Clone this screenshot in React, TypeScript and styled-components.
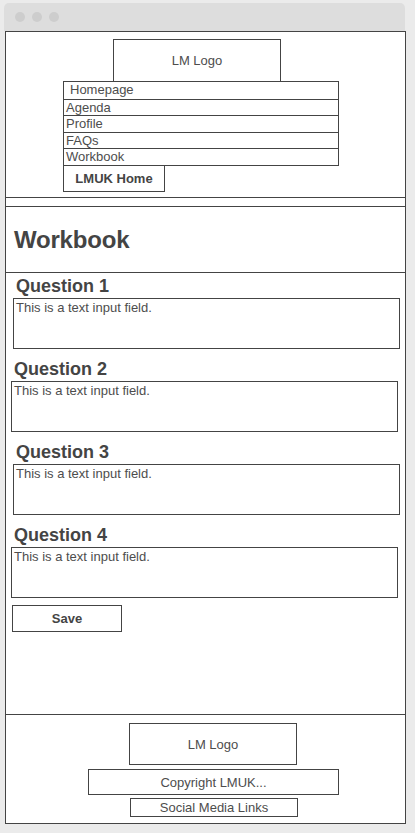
import React from "react";
import styled, { createGlobalStyle } from "styled-components";

const Global = createGlobalStyle`
  html, body { margin: 0; padding: 0; background: #ebebeb; }
  body { font-family: "Liberation Sans", Arial, sans-serif; color: #4a4a4a; }
  * { box-sizing: border-box; }
`;

const Page = styled.div`
  width: 415px;
  height: 833px;
  padding: 3px 10px 0 4px;
`;

const Chrome = styled.div`
  height: 28px;
  width: 401px;
  background: #dddddd;
  border-radius: 5px 5px 0 0;
  display: flex;
  align-items: center;
  gap: 7px;
  padding-left: 11px;
`;

const Dot = styled.span`
  width: 10px;
  height: 10px;
  border-radius: 50%;
  background: #cdcdcd;
`;

const Frame = styled.div`
  margin-left: 1px;
  width: 401px;
  height: 793px;
  border: 1px solid #444;
  background: #fff;
  display: flex;
  flex-direction: column;
`;

const Header = styled.header`
  height: 166px;
  border-bottom: 1px solid #444;
  padding-top: 7px;
  flex-shrink: 0;
`;

const Box = styled.div<{ $w: number; $h: number; $left: number; $bold?: boolean }>`
  width: ${(p) => p.$w}px;
  height: ${(p) => p.$h}px;
  margin-left: ${(p) => p.$left}px;
  border: 1px solid #444;
  display: flex;
  align-items: center;
  justify-content: center;
  font-size: 13px;
  font-weight: ${(p) => (p.$bold ? 700 : 400)};
  color: ${(p) => (p.$bold ? "#444" : "#4d4d4d")};
  background: #fff;
`;

const Nav = styled.nav`
  width: 276px;
  margin-left: 57px;
  margin-top: -1px;
  border: 1px solid #444;
`;

const NavItem = styled.div<{ $indent: number }>`
  height: 16.6px;
  line-height: 16px;
  font-size: 13px;
  padding-left: ${(p) => p.$indent}px;
  color: #4d4d4d;
  & + & { border-top: 1px solid #444; }
`;

const HomeButton = styled(Box)`
  margin-top: -1px;
`;

const Strip = styled.div`
  height: 9px;
  border-bottom: 1px solid #444;
  flex-shrink: 0;
`;

const TitleBar = styled.div`
  height: 66px;
  border-bottom: 1px solid #444;
  display: flex;
  align-items: center;
  padding-left: 8px;
  flex-shrink: 0;
`;

const Title = styled.h1`
  margin: 0;
  font-size: 24px;
  font-weight: 700;
  color: #444;
  letter-spacing: -0.2px;
`;

const Main = styled.main`
  flex: 1;
  border-bottom: 1px solid #444;
  padding-top: 3px;
`;

const Question = styled.section<{ $shift: number }>`
  margin-bottom: 10px;
  padding-left: ${(p) => p.$shift}px;
`;

const Label = styled.h2`
  margin: 0 0 1px 3px;
  font-size: 18px;
  line-height: 21px;
  font-weight: 700;
  color: #444;
`;

const Field = styled.div`
  width: 387px;
  height: 51px;
  border: 1px solid #444;
  font-size: 13px;
  line-height: 15px;
  padding: 1px 2px;
  color: #4d4d4d;
`;

const SaveButton = styled.div`
  width: 110px;
  height: 27px;
  margin-left: 6px;
  margin-top: -3px;
  border: 1px solid #444;
  display: flex;
  align-items: center;
  justify-content: center;
  font-size: 13px;
  font-weight: 700;
  color: #444;
`;

const Footer = styled.footer`
  height: 108px;
  padding-top: 8px;
  display: flex;
  flex-direction: column;
  gap: 4px;
  flex-shrink: 0;
`;

const SocialBox = styled(Box)`
  margin-top: -1px;
`;

const questions = [
  { label: "Question 1", shift: 7 },
  { label: "Question 2", shift: 5 },
  { label: "Question 3", shift: 7 },
  { label: "Question 4", shift: 5 },
];

export default function App() {
  return (
    <>
      <Global />
      <Page>
        <Chrome>
          <Dot />
          <Dot />
          <Dot />
        </Chrome>
        <Frame>
          <Header>
            <Box $w={168} $h={43} $left={107}>LM Logo</Box>
            <Nav>
              <NavItem $indent={6}>Homepage</NavItem>
              <NavItem $indent={2}>Agenda</NavItem>
              <NavItem $indent={2}>Profile</NavItem>
              <NavItem $indent={2}>FAQs</NavItem>
              <NavItem $indent={2}>Workbook</NavItem>
            </Nav>
            <HomeButton $w={102} $h={27} $left={57} $bold>
              LMUK Home
            </HomeButton>
          </Header>
          <Strip />
          <TitleBar>
            <Title>Workbook</Title>
          </TitleBar>
          <Main>
            {questions.map((q) => (
              <Question key={q.label} $shift={q.shift}>
                <Label>{q.label}</Label>
                <Field>This is a text input field.</Field>
              </Question>
            ))}
            <SaveButton>Save</SaveButton>
          </Main>
          <Footer>
            <Box $w={168} $h={42} $left={123}>LM Logo</Box>
            <Box $w={251} $h={26} $left={82}>Copyright LMUK...</Box>
            <SocialBox $w={168} $h={19} $left={124}>Social Media Links</SocialBox>
          </Footer>
        </Frame>
      </Page>
    </>
  );
}
